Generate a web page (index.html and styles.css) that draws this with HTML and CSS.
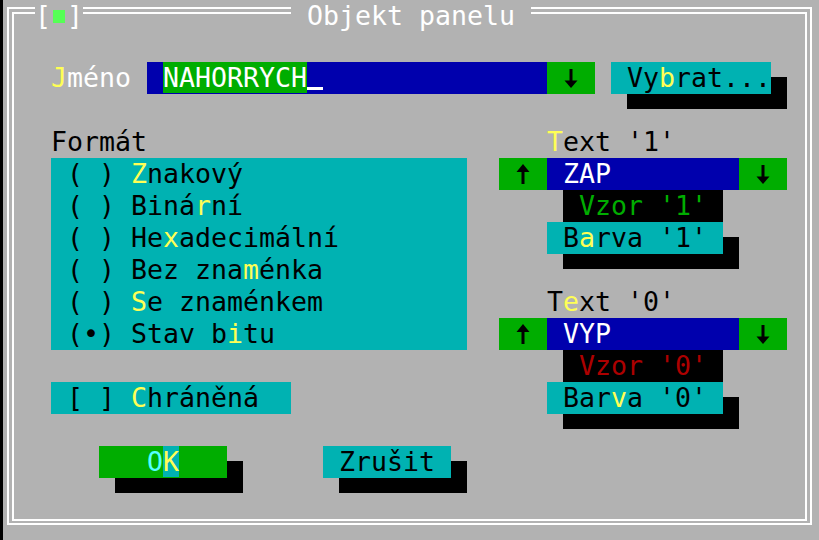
FILE: index.html
```html
<!DOCTYPE html>
<html lang="cs">
<head>
<meta charset="utf-8">
<title>Objekt panelu</title>
<link rel="stylesheet" href="styles.css">
</head>
<body>
<div class="screen">
  <div class="frame-outer">
    <div class="frame-inner">
      <div class="grid">
        <div class="lbl-jmeno"><span class="hk">J</span>méno</div>
        <div class="input"> <span class="sel">NAHORRYCH</span><span class="cursor"></span></div>
        <div class="drop drop-jmeno"><svg class="arrow" viewBox="0 0 16 32" width="16" height="32"><rect x="6.5" y="7" width="3" height="13"/><polygon points="1.5,18.5 14.5,18.5 8,26"/></svg></div>
        <div class="btn btn-vybrat"> Vy<span class="hk">b</span>rat...</div>

        <div class="lbl-format">Formát</div>
        <div class="radios">
          <div class="ritem"> ( ) <span class="hk">Z</span>nakový</div>
          <div class="ritem"> ( ) Biná<span class="hk">r</span>ní</div>
          <div class="ritem"> ( ) He<span class="hk">x</span>adecimální</div>
          <div class="ritem"> ( ) Bez zna<span class="hk">m</span>énka</div>
          <div class="ritem"> ( ) <span class="hk">S</span>e znaménkem</div>
          <div class="ritem"> (•) Stav b<span class="hk">i</span>tu</div>
        </div>

        <div class="check"> [ ] <span class="hk">C</span>hráněná</div>

        <div class="btn btn-ok">   <span class="ok-o">O</span><span class="ok-k">K</span>   </div>
        <div class="btn btn-zrusit"> Zrušit </div>

        <div class="lbl-text1"><span class="hk">T</span>ext '1'</div>
        <div class="drop up1"><svg class="arrow" viewBox="0 0 16 32" width="16" height="32"><polygon points="8,6 14.5,14 1.5,14"/><rect x="6.5" y="12" width="3" height="14"/></svg></div>
        <div class="val val1"> ZAP</div>
        <div class="drop down1"><svg class="arrow" viewBox="0 0 16 32" width="16" height="32"><rect x="6.5" y="7" width="3" height="13"/><polygon points="1.5,18.5 14.5,18.5 8,26"/></svg></div>
        <div class="vzor vzor1"> Vzor '1'</div>
        <div class="btn btn-barva1"> B<span class="hk">a</span>rva '1' </div>

        <div class="lbl-text0">T<span class="hk">e</span>xt '0'</div>
        <div class="drop up0"><svg class="arrow" viewBox="0 0 16 32" width="16" height="32"><polygon points="8,6 14.5,14 1.5,14"/><rect x="6.5" y="12" width="3" height="14"/></svg></div>
        <div class="val val0"> VYP</div>
        <div class="drop down0"><svg class="arrow" viewBox="0 0 16 32" width="16" height="32"><rect x="6.5" y="7" width="3" height="13"/><polygon points="1.5,18.5 14.5,18.5 8,26"/></svg></div>
        <div class="vzor vzor0"> Vzor '0'</div>
        <div class="btn btn-barva0"> Bar<span class="hk">v</span>a '0' </div>
      </div>
    </div>
  </div>
  <div class="titlebar">
    <span class="close"><span class="br">[</span><span class="sq"><span class="sq-in"></span></span><span class="br">]</span></span>
    <span class="title"> Objekt panelu </span>
  </div>
</div>
</body>
</html>
```
FILE: styles.css
```css
html, body {
  margin: 0;
  padding: 0;
  background: #b2b2b2;
}

.screen {
  position: relative;
  box-sizing: border-box;
  width: 819px;
  height: 540px;
  overflow: hidden;
  background: #b2b2b2;
  border-left: 3px solid #000;
  font-family: "DejaVu Sans Mono", "Liberation Mono", monospace;
  font-size: 26.58px;
  line-height: 32px;
}

.frame-outer {
  box-sizing: border-box;
  margin-left: 4px;
  margin-top: 7px;
  width: 805px;
  height: 518px;
  border: 2px solid #fff;
  padding: 3px 3px 2px 3px;
}

.frame-inner {
  box-sizing: border-box;
  height: 100%;
  border: 2px solid #fff;
  padding: 16px 0 0 5px;
}

.grid {
  display: grid;
  grid-template-columns: repeat(49, 16px);
  grid-template-rows: repeat(15, 32px);
  white-space: pre;
  color: #000;
}

.hk { color: #ffff55; }

/* Jméno row */
.lbl-jmeno { grid-column: 3 / 8; grid-row: 2; color: #fff; }
.input {
  grid-column: 9 / 34; grid-row: 2;
  background: #0000ad; color: #fff;
  overflow: hidden;
}
.sel { background: #00ad00; color: #fff; }
.cursor {
  display: inline-block;
  vertical-align: top;
  position: relative;
  width: 16px;
  height: 32px;
}
.cursor::after {
  content: "";
  position: absolute;
  left: 0; right: 0;
  top: 25px;
  height: 3px;
  background: #fff;
}

.drop {
  background: #00ad00;
  display: flex;
  justify-content: center;
}
.arrow { display: block; fill: #000; }
.drop-jmeno { grid-column: 34 / 37; grid-row: 2; }

.btn {
  background: #00b2b2;
  color: #000;
  box-shadow: 16px 15px 0 0 #000;
}
.btn-vybrat { grid-column: 38 / 48; grid-row: 2; }

/* Formát */
.lbl-format { grid-column: 3 / 9; grid-row: 4; }
.radios {
  grid-column: 3 / 29; grid-row: 5 / 11;
  background: #00b2b2;
  display: flex;
  flex-direction: column;
}
.ritem { height: 32px; }

.check { grid-column: 3 / 18; grid-row: 12; background: #00b2b2; }

.btn-ok { grid-column: 6 / 14; grid-row: 14; background: #00ad00; }
.ok-o { color: #55ffff; }
.ok-k { color: #ffff55; background: #00b2b2; }
.btn-zrusit { grid-column: 20 / 28; grid-row: 14; }

/* Text '1' / '0' */
.lbl-text1 { grid-column: 34 / 42; grid-row: 4; }
.up1 { grid-column: 31 / 34; grid-row: 5; }
.val { background: #0000ad; color: #fff; }
.val1 { grid-column: 34 / 46; grid-row: 5; }
.down1 { grid-column: 46 / 49; grid-row: 5; }
.vzor { background: #000; }
.vzor1 { grid-column: 35 / 45; grid-row: 6; color: #00ad00; }
.btn-barva1 { grid-column: 34 / 45; grid-row: 7; }

.lbl-text0 { grid-column: 34 / 42; grid-row: 9; }
.up0 { grid-column: 31 / 34; grid-row: 10; }
.val0 { grid-column: 34 / 46; grid-row: 10; }
.down0 { grid-column: 46 / 49; grid-row: 10; }
.vzor0 { grid-column: 35 / 45; grid-row: 11; color: #ad0000; }
.btn-barva0 { grid-column: 34 / 45; grid-row: 12; }

/* Title bar over the top frame line */
.titlebar {
  position: absolute;
  top: 0;
  left: 32px;
  display: flex;
  height: 30px;
  color: #fff;
  white-space: pre;
}
.close {
  display: flex;
  width: 48px;
  height: 30px;
  background: #b2b2b2;
}
.br { width: 16px; text-align: center; }
.sq {
  width: 16px;
  height: 30px;
  position: relative;
}
.sq-in {
  position: absolute;
  left: 2px;
  top: 10px;
  width: 12px;
  height: 13px;
  background: #55ff55;
}
.title {
  margin-left: 208px;
  width: 240px;
  height: 30px;
  background: #b2b2b2;
}
```
